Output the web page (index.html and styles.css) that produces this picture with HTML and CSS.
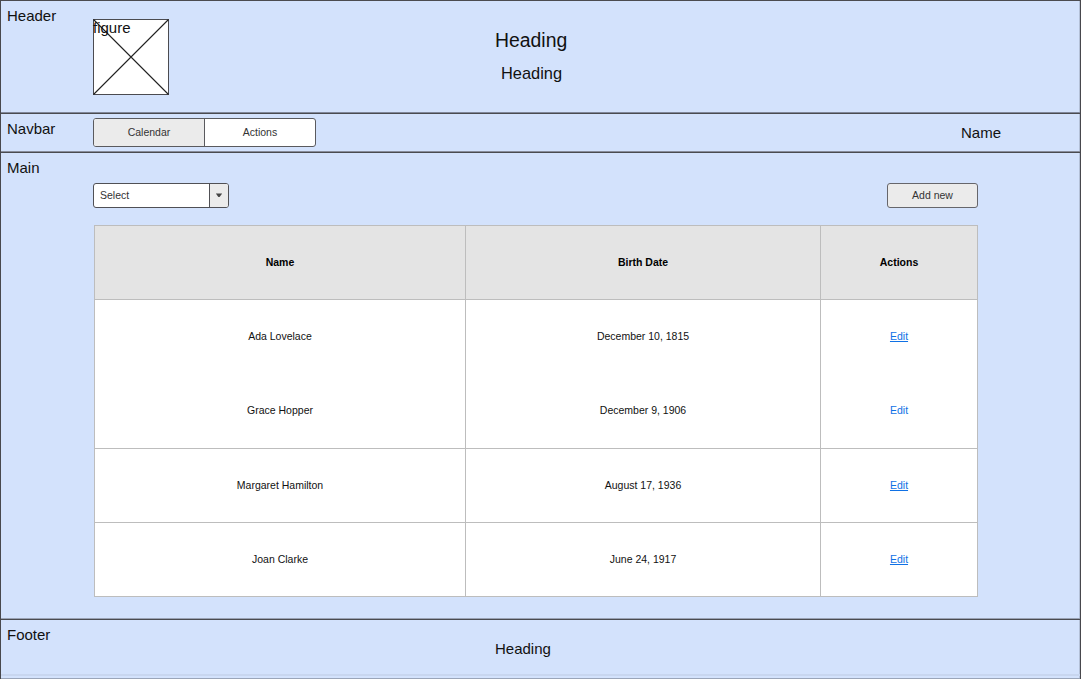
FILE: index.html
```html
<!DOCTYPE html>
<html lang="en">
<head>
<meta charset="utf-8">
<title>Wireframe</title>
<link rel="stylesheet" href="styles.css">
</head>
<body>
<div class="page">
  <header class="header">
    <span class="label">Header</span>
    <div class="figure">
      <svg class="figure-box" width="76" height="76" viewBox="0 0 76 76"><rect x=".5" y=".5" width="75" height="75" fill="#fff" stroke="#4b4b50"/><path d="M.5.5l75 75M75.5.5l-75 75" stroke="#222" stroke-width="1.1" fill="none"/></svg>
      <span class="figure-label">figure</span>
    </div>
    <div class="titles">
      <h1 class="title">Heading</h1>
      <h2 class="subtitle">Heading</h2>
    </div>
  </header>
  <nav class="navbar">
    <span class="label">Navbar</span>
    <div class="tabs">
      <span class="tab tab-active">Calendar</span>
      <span class="tab">Actions</span>
    </div>
    <span class="user">Name</span>
  </nav>
  <main class="main">
    <span class="label">Main</span>
    <div class="content">
      <div class="toolbar">
        <div class="select">
          <span class="select-value">Select</span>
          <span class="select-arrow"><svg width="8" height="5" viewBox="0 0 8 5"><path d="M.8.5h6.4L4.6 4H3.4z" fill="#444"/></svg></span>
        </div>
        <button class="button">Add new</button>
      </div>
      <div class="table">
        <div class="row row-head"><span>Name</span><span>Birth Date</span><span>Actions</span></div>
        <div class="row row-open"><span>Ada Lovelace</span><span>December 10, 1815</span><span><a class="link">Edit</a></span></div>
        <div class="row"><span>Grace Hopper</span><span>December 9, 1906</span><span><a class="link link-plain">Edit</a></span></div>
        <div class="row"><span>Margaret Hamilton</span><span>August 17, 1936</span><span><a class="link">Edit</a></span></div>
        <div class="row"><span>Joan Clarke</span><span>June 24, 1917</span><span><a class="link">Edit</a></span></div>
      </div>
    </div>
  </main>
  <footer class="footer">
    <span class="label">Footer</span>
    <span class="footer-title">Heading</span>
    <div class="footer-rule"></div>
  </footer>
</div>
</body>
</html>
```
FILE: styles.css
```css
* { box-sizing: border-box; }
body {
  margin: 0;
  font-family: "Liberation Sans", Arial, sans-serif;
  font-size: 15px;
  line-height: 18px;
  color: #111;
}
.page {
  display: grid;
  grid-template-rows: 114px 39px 467px 59px;
  width: 1081px;
  height: 679px;
  overflow: hidden;
  background: #d3e2fc;
  border-left: 1px solid #48484d;
  border-right: 1px solid #48484d;
  box-shadow: inset -1px 0 #b3c0d7;
}
.header, .navbar, .main {
  display: grid;
  grid-template-columns: 92px 1fr;
  border-bottom: 1px solid #4a4b50;
}
.label { padding: 6px 0 0 6px; }
.header {
  grid-template-columns: 92px 76px 1fr;
  border-top: 1px solid #4b4b50;
  box-shadow: inset 0 -1px #80879a;
}
.figure { display: grid; align-self: start; margin-top: 18px; }
.figure-box, .figure-label { grid-area: 1 / 1; display: block; }
.figure-label { z-index: 1; }
.titles { padding: 27px 0 0 326px; }
.title, .subtitle { margin: 0; font-weight: 400; }
.title { font-size: 19.4px; line-height: 24px; }
.subtitle { margin: 11px 0 0 6px; font-size: 16.4px; line-height: 20px; }
.navbar {
  grid-template-columns: 92px 223px 1fr;
  box-shadow: inset 0 -1px #888d9b;
}
.tabs {
  display: flex;
  height: 29px;
  margin-top: 4px;
  border: 1px solid #5a5a5e;
  border-radius: 3px;
  overflow: hidden;
  background: #fff;
  color: #333;
  font-size: 10.5px;
  line-height: 27px;
}
.tab { flex: 1; text-align: center; }
.tab-active { background: #ebebeb; border-right: 1px solid #5a5a5e; }
.user { justify-self: end; padding: 10px 79px 0 0; }
.main { box-shadow: inset 0 -1px #99a2b4; }
.content { width: 885px; padding-top: 30px; }
.toolbar { display: flex; justify-content: space-between; height: 26px; }
.select {
  display: flex;
  width: 136px;
  height: 25px;
  border: 1px solid #505055;
  border-radius: 3px;
  overflow: hidden;
  background: #fff;
  color: #333;
  font-size: 10.5px;
  line-height: 23px;
}
.select-value { flex: 1; padding-left: 6px; }
.select-arrow {
  display: flex;
  align-items: center;
  justify-content: center;
  width: 19px;
  border-left: 1px solid #505055;
  background: #ebebeb;
}
.button {
  width: 91px;
  height: 25px;
  padding: 0;
  border: 1px solid #66666b;
  border-radius: 3px;
  background: #ebebeb;
  color: #333;
  font: 10.5px/23px "Liberation Sans", Arial, sans-serif;
}
.table {
  display: grid;
  grid-template-rows: 74px 75px 74px 74px 74px;
  width: 884px;
  margin: 16px 0 0 1px;
  border: 1px solid #bdbdbd;
  border-bottom: 0;
  border-right: 0;
  background: #fff;
  font-size: 10.5px;
}
.row {
  display: grid;
  grid-template-columns: 371px 355px 157px;
  border-bottom: 1px solid #bdbdbd;
}
.row > span {
  display: flex;
  align-items: center;
  justify-content: center;
  padding-bottom: 2px;
  border-right: 1px solid #bdbdbd;
}
.row-head { background: #e4e4e4; font-weight: 700; color: #000; }
.row-open { border-bottom-color: transparent; }
.row-open > span { margin-bottom: -1px; padding-bottom: 3px; }
.row-open + .row > span { padding-bottom: 4px; }
.link { color: #1071e5; text-decoration: underline; }
.link-plain { text-decoration: none; }
.footer {
  display: grid;
  grid-template-columns: 494px 1fr;
  grid-template-rows: 54px 2px;
  border-bottom: 1px solid #9aa5b9;
}
.footer-title { padding-top: 20px; }
.footer-rule { grid-column: 1 / -1; background: #c8d6ef; }
```
